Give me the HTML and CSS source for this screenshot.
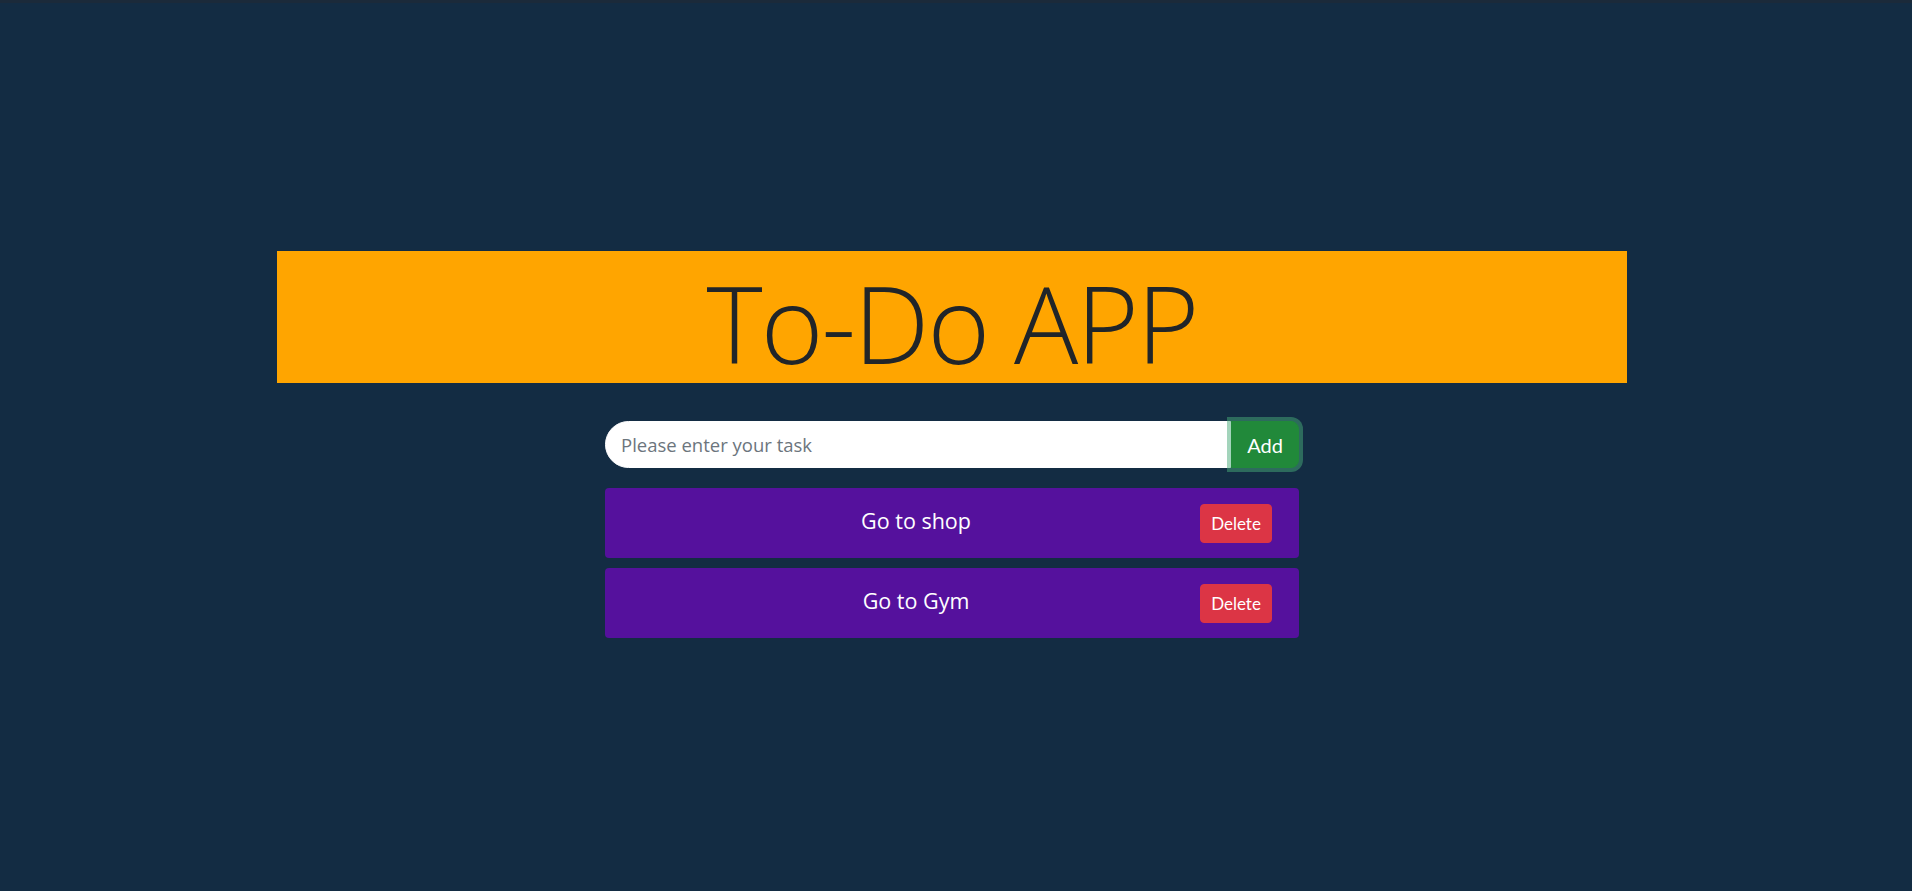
FILE: index.html
```html
<!DOCTYPE html>
<html lang="en">
<head>
<meta charset="utf-8">
<title>To-Do APP</title>
<link rel="stylesheet" href="styles.css">
</head>
<body>
<div class="topbar"></div>
<div class="page">
  <header class="banner">
    <h1 class="title">To-Do APP</h1>
  </header>
  <div class="entry">
    <input class="task-input" type="text" placeholder="Please enter your task">
    <button class="add-btn" type="button">Add</button>
  </div>
  <ul class="tasks">
    <li class="task">
      <span class="task-text">Go to shop</span>
      <button class="del-btn" type="button">Delete</button>
    </li>
    <li class="task">
      <span class="task-text">Go to Gym</span>
      <button class="del-btn" type="button">Delete</button>
    </li>
  </ul>
</div>
</body>
</html>
```
FILE: styles.css
```css
* { box-sizing: border-box; }
html, body {
  margin: 0;
  height: 100%;
  background: #132c43;
  font-family: "Open Sans", "Noto Sans", sans-serif;
  color: #212529;
}
.topbar {
  height: 3px;
  background: #1b2a3a;
}
.page {
  width: 1904px;
  padding-top: 248px;
  display: flex;
  flex-direction: column;
  align-items: center;
}
.banner {
  width: 1350px;
  height: 132px;
  background: #ffa500;
  display: flex;
  align-items: center;
  justify-content: center;
}
.title {
  margin: 0;
  font-weight: 300;
  font-size: 107px;
  line-height: 1;
  color: #212529;
  letter-spacing: -2px;
  padding-top: 10px;
}
.entry {
  margin-top: 38px;
  width: 694px;
  height: 47px;
  display: flex;
}
.task-input {
  flex: 1;
  min-width: 0;
  height: 47px;
  border: 1px solid #fff;
  border-radius: 24px 0 0 24px;
  background: #fff;
  padding: 0 15px;
  font-family: "Open Sans", "Noto Sans", sans-serif;
  font-size: 18.5px;
  color: #212529;
  outline: none;
}
.task-input::placeholder { color: #6c757d; }
.add-btn {
  position: relative;
  z-index: 1;
  width: 68px;
  height: 47px;
  border: 1px solid #21893a;
  border-radius: 0 8px 8px 0;
  background: #21893a;
  color: #fff;
  font-family: "Lato", sans-serif;
  font-size: 20px;
  padding: 0;
  box-shadow: 0 0 0 4px rgba(72, 170, 120, 0.5);
}
.tasks {
  list-style: none;
  margin: 20px 0 0;
  padding: 0;
  width: 694px;
  display: flex;
  flex-direction: column;
  gap: 10px;
}
.task {
  height: 70px;
  background: #55119d;
  border-radius: 4px;
  padding: 0 27px;
  display: flex;
  align-items: center;
}
.task-text {
  flex: 1;
  text-align: center;
  color: #fff;
  font-size: 21.5px;
  margin-top: -5px;
}
.del-btn {
  width: 72px;
  height: 39px;
  background: #dc3545;
  border: 1px solid #dc3545;
  border-radius: 4px;
  color: #fff;
  font-family: "Lato", sans-serif;
  font-size: 17px;
  padding: 0;
}
```
